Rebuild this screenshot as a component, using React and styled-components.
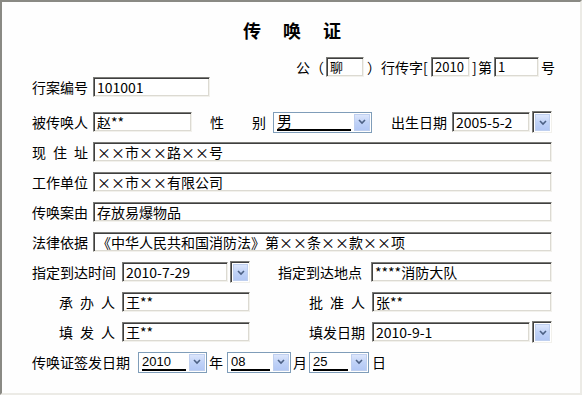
import React from 'react';
import styled, { createGlobalStyle } from 'styled-components';

const GlobalStyle = createGlobalStyle`
  html, body { margin: 0; padding: 0; background: #ffffff; }
  body {
    font-family: "Noto Sans CJK SC", "Liberation Sans", sans-serif;
    color: #000;
  }
`;

const Page = styled.div`
  width: 582px;
  height: 395px;
  box-sizing: border-box;
  background: #fefefe;
  border-top: 2px solid #8a8a84;
  border-left: 2px solid #8a8a84;
  border-right: 2px solid #ecebe6;
  border-bottom: 2px solid #ecebe6;
  padding-left: 30px;
  overflow: hidden;
`;

const Title = styled.div`
  height: 55px;
  padding: 16px 6px 0 0;
  box-sizing: border-box;
  text-align: center;
  font-size: 18px;
  line-height: 24px;
  font-weight: bold;
  letter-spacing: 22px;
`;

const Row = styled.div`
  display: flex;
  align-items: center;
  height: ${p => p.$h || 30}px;
  justify-content: ${p => (p.$right ? 'flex-end' : 'flex-start')};
  padding-right: ${p => (p.$right ? 25 : 0)}px;
  margin-bottom: ${p => p.$mb || 0}px;
`;

const Label = styled.span`
  font-size: 14px;
  line-height: 20px;
  white-space: nowrap;
  flex: none;
  width: ${p => (p.$w ? p.$w + 'px' : 'auto')};
  margin-left: ${p => p.$ml || 0}px;
  margin-right: ${p => (p.$mr === undefined ? 5 : p.$mr)}px;
  letter-spacing: ${p => p.$ls || 0}px;
`;

const Field = styled.div`
  box-sizing: border-box;
  height: 20px;
  width: ${p => p.$w}px;
  flex: ${p => (p.$grow ? 1 : 'none')};
  margin-right: ${p => p.$mr || 0}px;
  background: #fff;
  border: 1px solid;
  border-color: #7c7c78 #f2f1ec #f2f1ec #7c7c78;
  box-shadow: inset 1px 1px 0 #3f3f3f, inset -1px -1px 0 #dcdad2;
  padding: 0 2px 0 3px;
  font-size: ${p => (p.$small ? 13 : 14)}px;
  line-height: 18px;
  font-family: "Noto Sans CJK SC", "Liberation Sans", sans-serif;
  white-space: nowrap;
  overflow: hidden;
`;

const Wide = styled.div`
  flex: 1;
  display: flex;
  margin-right: 28px;
`;

const Select = styled.div`
  box-sizing: border-box;
  height: 21px;
  width: ${p => p.$w}px;
  flex: none;
  margin-right: ${p => p.$mr || 0}px;
  border: 1px solid #7f9db9;
  background: #fff;
  display: flex;
  align-items: stretch;
  padding: 1px;
`;

const SelectText = styled.div`
  flex: 1;
  margin: 0 3px 0 2px;
  font-size: ${p => (p.$cjk ? 15 : 13)}px;
  line-height: 15px;
  font-family: "Liberation Sans", "Noto Sans CJK SC", sans-serif;
  border-bottom: 2px solid #000;
  height: 15px;
  overflow: hidden;
`;

const Arrow = styled.div`
  width: 16px;
  display: flex;
  align-items: center;
  justify-content: center;
  background: linear-gradient(180deg, #dce6fc 0%, #c0d2f7 50%, #b3c8f5 100%);
  border: 1px solid #bfcfef;
  box-sizing: border-box;
`;

const DateBtn = styled.div`
  box-sizing: border-box;
  width: 20px;
  height: 22px;
  flex: none;
  margin-left: 2px;
  margin-right: ${p => p.$mr || 0}px;
  border: 1px solid;
  border-color: #7c7c78 #f2f1ec #f2f1ec #7c7c78;
  box-shadow: inset 1px 1px 0 #3f3f3f;
  background: #fff;
  padding: 2px 1px 1px 2px;
  display: flex;
`;

const Chevron = () => (
  <svg width="8" height="6" viewBox="0 0 8 6">
    <path d="M1 1 L4 4 L7 1" stroke="#4d6185" strokeWidth="1.6" fill="none" />
  </svg>
);

const DropBtn = () => (
  <Arrow>
    <Chevron />
  </Arrow>
);

const App = () => (
  <>
    <GlobalStyle />
    <Page>
      <Title>传唤证</Title>

      <Row $h={20} $right>
        <Label $w={30} $mr={0}>公（</Label>
        <Field $w={38} $small>聊</Field>
        <Label $w={64} $ml={3} $mr={0}>）行传字[</Label>
        <Field $w={39} $small>2010</Field>
        <Label $w={6} $ml={2} $mr={0}>]</Label>
        <Label $w={14} $mr={2}>第</Label>
        <Field $w={45} $small>1</Field>
        <Label $ml={2} $mr={0}>号</Label>
      </Row>

      <Row $h={20} $mb={10}>
        <Label $w={56}>行案编号</Label>
        <Field $w={117}>101001</Field>
      </Row>

      <Row>
        <Label $w={56}>被传唤人</Label>
        <Field $w={99} $mr={18}>赵**</Field>
        <Label $w={42} $mr={0}>性</Label>
        <Label $w={14} $mr={7}>别</Label>
        <Select $w={99} $mr={19}>
          <SelectText $cjk>男</SelectText>
          <DropBtn />
        </Select>
        <Label $w={56}>出生日期</Label>
        <Field $w={78}>2005-5-2</Field>
        <DateBtn>
          <DropBtn />
        </DateBtn>
      </Row>

      <Row>
        <Label $w={56} $ls={7}>现住址</Label>
        <Wide><Field $grow>××市××路××号</Field></Wide>
      </Row>

      <Row>
        <Label $w={56}>工作单位</Label>
        <Wide><Field $grow>××市××有限公司</Field></Wide>
      </Row>

      <Row>
        <Label $w={56}>传唤案由</Label>
        <Wide><Field $grow>存放易爆物品</Field></Wide>
      </Row>

      <Row>
        <Label $w={56}>法律依据</Label>
        <Wide><Field $grow>《中华人民共和国消防法》第××条××款××项</Field></Wide>
      </Row>

      <Row>
        <Label $w={84} $mr={6}>指定到达时间</Label>
        <Field $w={106}>2010-7-29</Field>
        <DateBtn $mr={28}>
          <DropBtn />
        </DateBtn>
        <Label $w={86} $mr={7}>指定到达地点</Label>
        <Wide><Field $grow>****消防大队</Field></Wide>
      </Row>

      <Row>
        <Label $w={59} $ml={27} $mr={4} $ls={7}>承办人</Label>
        <Field $w={128} $mr={59}>王**</Field>
        <Label $w={63} $mr={0} $ls={7}>批准人</Label>
        <Wide><Field $grow>张**</Field></Wide>
      </Row>

      <Row>
        <Label $w={59} $ml={27} $mr={4} $ls={7}>填发人</Label>
        <Field $w={128} $mr={59}>王**</Field>
        <Label $w={63} $mr={0}>填发日期</Label>
        <Field $w={158}>2010-9-1</Field>
        <DateBtn>
          <DropBtn />
        </DateBtn>
      </Row>

      <Row>
        <Label $w={98} $mr={8}>传唤证签发日期</Label>
        <Select $w={69}>
          <SelectText>2010</SelectText>
          <DropBtn />
        </Select>
        <Label $w={14} $ml={2} $mr={4}>年</Label>
        <Select $w={64}>
          <SelectText>08</SelectText>
          <DropBtn />
        </Select>
        <Label $w={14} $ml={2} $mr={2}>月</Label>
        <Select $w={60}>
          <SelectText>25</SelectText>
          <DropBtn />
        </Select>
        <Label $ml={3}>日</Label>
      </Row>
    </Page>
  </>
);

export default App;
